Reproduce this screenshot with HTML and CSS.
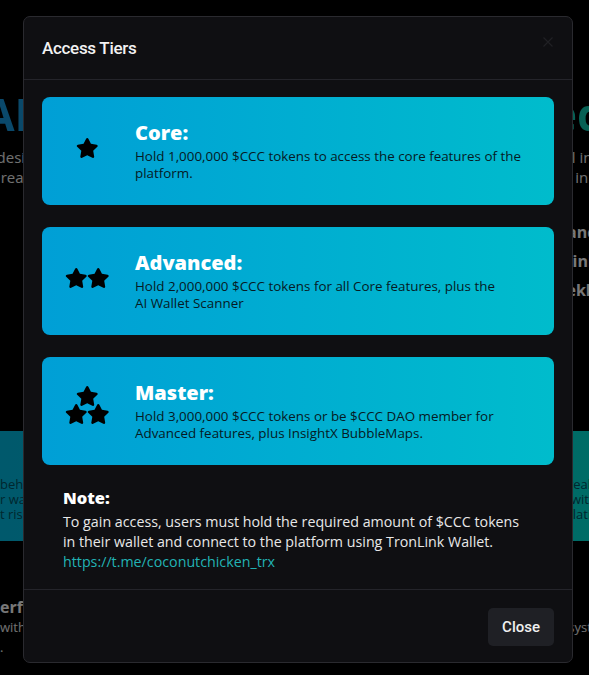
FILE: index.html
```html
<!DOCTYPE html>
<html lang="en">
<head>
<meta charset="utf-8">
<title>Access Tiers</title>
<link rel="stylesheet" href="styles.css">
</head>
<body>
<main class="page">
  <section class="hero">
    <div class="hero-row"><h1 class="hero-title">AI-Powered Scans Redefined</h1></div>
    <div class="hero-row hero-row-first"><p class="hero-line">design to deliver deep on-chain analysis, wallet scoring and smart tracking tools, all in</p></div>
    <div class="hero-row"><p class="hero-line">real-time, giving traders clarity and the full confidence they need to stay ahead, all in</p></div>
    <ul class="hero-points">
      <li>Scan any wallet for suspicious activity and quick</li>
      <li>Visualise token holder clusters and its links</li>
      <li>Receive alerts on whale moves and weekly</li>
    </ul>
  </section>
  <section class="band">
    <p class="band-text">behind every transaction there is a story to be told and understood by traders; our scanner reveals the pockets of</p>
    <p class="band-text">r wallets that move markets, their connections and the direct relations in the wider ecosystem with selection</p>
    <p class="band-text">t risks they create for everyone. Stay informed with smart alerts, protection tools and holder relationships</p>
  </section>
  <section class="perf">
    <h3 class="perf-title">erformance</h3>
    <p class="perf-text">with optimised infrastructure built for speed and scale across many platforms and trading ecosystems</p>
    <p class="perf-text">.</p>
  </section>
</main>

<div class="backdrop"></div>

<div class="modal-wrap">
  <div class="modal" role="dialog" aria-labelledby="tiers-title">
    <header class="modal-header">
      <h2 class="modal-title" id="tiers-title">Access Tiers</h2>
      <button class="modal-x" aria-label="Close">
        <svg viewBox="0 0 16 16" width="12" height="12"><path d="M2 2L14 14M14 2L2 14" stroke="currentColor" stroke-width="1.6" fill="none"/></svg>
      </button>
    </header>

    <div class="modal-body">
      <div class="tier">
        <div class="tier-icon">
          <svg class="star" viewBox="0 0 576 512"><path d="M259.3 17.8L194 150.2 47.9 171.5c-26.2 3.8-36.7 36.1-17.7 54.6l105.7 103-25 145.5c-4.5 26.3 23.2 46 46.4 33.7L288 439.6l130.7 68.7c23.2 12.2 50.9-7.4 46.4-33.7l-25-145.5 105.7-103c19-18.5 8.5-50.8-17.7-54.6L382 150.2 316.7 17.8c-11.7-23.6-45.6-23.9-57.4 0z"/></svg>
        </div>
        <div class="tier-text">
          <h3 class="tier-name">Core:</h3>
          <p class="tier-desc">Hold 1,000,000 $CCC tokens to access the core features of the platform.</p>
        </div>
      </div>

      <div class="tier">
        <div class="tier-icon">
          <div class="star-row">
            <svg class="star" viewBox="0 0 576 512"><path d="M259.3 17.8L194 150.2 47.9 171.5c-26.2 3.8-36.7 36.1-17.7 54.6l105.7 103-25 145.5c-4.5 26.3 23.2 46 46.4 33.7L288 439.6l130.7 68.7c23.2 12.2 50.9-7.4 46.4-33.7l-25-145.5 105.7-103c19-18.5 8.5-50.8-17.7-54.6L382 150.2 316.7 17.8c-11.7-23.6-45.6-23.9-57.4 0z"/></svg>
            <svg class="star" viewBox="0 0 576 512"><path d="M259.3 17.8L194 150.2 47.9 171.5c-26.2 3.8-36.7 36.1-17.7 54.6l105.7 103-25 145.5c-4.5 26.3 23.2 46 46.4 33.7L288 439.6l130.7 68.7c23.2 12.2 50.9-7.4 46.4-33.7l-25-145.5 105.7-103c19-18.5 8.5-50.8-17.7-54.6L382 150.2 316.7 17.8c-11.7-23.6-45.6-23.9-57.4 0z"/></svg>
          </div>
        </div>
        <div class="tier-text">
          <h3 class="tier-name">Advanced:</h3>
          <p class="tier-desc">Hold 2,000,000 $CCC tokens for all Core features, plus the AI&nbsp;Wallet Scanner</p>
        </div>
      </div>

      <div class="tier">
        <div class="tier-icon tier-icon-pyramid">
          <div class="pyramid">
            <div class="star-row">
              <svg class="star" viewBox="0 0 576 512"><path d="M259.3 17.8L194 150.2 47.9 171.5c-26.2 3.8-36.7 36.1-17.7 54.6l105.7 103-25 145.5c-4.5 26.3 23.2 46 46.4 33.7L288 439.6l130.7 68.7c23.2 12.2 50.9-7.4 46.4-33.7l-25-145.5 105.7-103c19-18.5 8.5-50.8-17.7-54.6L382 150.2 316.7 17.8c-11.7-23.6-45.6-23.9-57.4 0z"/></svg>
            </div>
            <div class="star-row star-row-lower">
              <svg class="star" viewBox="0 0 576 512"><path d="M259.3 17.8L194 150.2 47.9 171.5c-26.2 3.8-36.7 36.1-17.7 54.6l105.7 103-25 145.5c-4.5 26.3 23.2 46 46.4 33.7L288 439.6l130.7 68.7c23.2 12.2 50.9-7.4 46.4-33.7l-25-145.5 105.7-103c19-18.5 8.5-50.8-17.7-54.6L382 150.2 316.7 17.8c-11.7-23.6-45.6-23.9-57.4 0z"/></svg>
              <svg class="star" viewBox="0 0 576 512"><path d="M259.3 17.8L194 150.2 47.9 171.5c-26.2 3.8-36.7 36.1-17.7 54.6l105.7 103-25 145.5c-4.5 26.3 23.2 46 46.4 33.7L288 439.6l130.7 68.7c23.2 12.2 50.9-7.4 46.4-33.7l-25-145.5 105.7-103c19-18.5 8.5-50.8-17.7-54.6L382 150.2 316.7 17.8c-11.7-23.6-45.6-23.9-57.4 0z"/></svg>
            </div>
          </div>
        </div>
        <div class="tier-text">
          <h3 class="tier-name">Master:</h3>
          <p class="tier-desc">Hold 3,000,000 $CCC tokens or be $CCC DAO member for Advanced features, plus InsightX BubbleMaps.</p>
        </div>
      </div>

      <div class="note">
        <h4 class="note-title">Note:</h4>
        <p class="note-text">To gain access, users must hold the required amount of $CCC tokens in their wallet and connect to the platform using TronLink Wallet.<br><a class="note-link" href="#">https://t.me/coconutchicken_trx</a></p>
      </div>
    </div>

    <footer class="modal-footer">
      <button class="btn-close">Close</button>
    </footer>
  </div>
</div>
</body>
</html>
```

FILE: styles.css
```css
html, body {
  margin: 0;
  padding: 0;
  background: #000;
  height: 100%;
  overflow: hidden;
}

body {
  font-family: "Open Sans", "DejaVu Sans", sans-serif;
}

/* ---------- background page ---------- */
.page {
  width: 100%;
  overflow: hidden;
}

.hero {
  padding-top: 88px;
}

.hero-row {
  display: flex;
  justify-content: center;
}

.hero-row-first {
  margin-top: 7px;
}

.hero-title {
  margin: 0;
  white-space: nowrap;
  font-size: 44px;
  font-weight: 700;
  line-height: 52px;
  background: linear-gradient(90deg, #1590d8, #0fc4a8);
  -webkit-background-clip: text;
  background-clip: text;
  color: transparent;
}

.hero-line {
  margin: 0;
  white-space: nowrap;
  font-size: 15px;
  line-height: 20px;
  color: #e0e0e0;
}

.hero-points {
  list-style: none;
  margin: 31px 0 0;
  padding: 0 0 0 260px;
  white-space: nowrap;
}

.hero-points li {
  font-size: 16px;
  font-weight: 700;
  line-height: 29px;
  color: #f0f0f0;
}

.band {
  margin-top: 126px;
  height: 110px;
  box-sizing: border-box;
  padding-top: 46px;
  background: linear-gradient(90deg, #00b2d8, #00d8cc);
}

.band-text {
  margin: 0;
  white-space: nowrap;
  font-size: 13px;
  line-height: 15px;
  color: #004f5e;
}

.perf {
  padding-top: 56px;
}

.perf-title {
  margin: 0;
  font-size: 16px;
  font-weight: 700;
  line-height: 20px;
  color: #f0f0f0;
}

.perf-text {
  margin: 0;
  white-space: nowrap;
  font-size: 13px;
  line-height: 20px;
  color: #e0e0e0;
}

.backdrop {
  position: fixed;
  inset: 0;
  background: rgba(0, 0, 0, 0.5);
}

/* ---------- modal ---------- */
.modal-wrap {
  position: fixed;
  inset: 0;
  padding: 16px 0 0 23px;
}

.modal {
  width: 550px;
  box-sizing: border-box;
  background: #0f0f12;
  border: 1px solid #2a2a2f;
  border-radius: 7px;
}

.modal-header {
  display: flex;
  align-items: flex-start;
  justify-content: space-between;
  padding: 18px 18px;
  border-bottom: 1px solid #24242a;
}

.modal-title {
  margin: 0;
  font-family: "Roboto", "Liberation Sans", sans-serif;
  font-size: 17px;
  font-weight: 500;
  line-height: 26px;
  letter-spacing: -0.3px;
  color: #f2f2f2;
}

.modal-x {
  background: none;
  border: 0;
  padding: 0;
  margin-top: 1px;
  color: #202024;
  display: flex;
}

.modal-body {
  padding: 17px 18px 17px;
}

.tier {
  display: flex;
  align-items: center;
  height: 108px;
  box-sizing: border-box;
  padding: 0 20px;
  margin-bottom: 22px;
  border-radius: 8px;
  background: linear-gradient(90deg, #009fd6, #00bccc);
}

.tier-icon {
  width: 50px;
  flex: none;
  display: flex;
  justify-content: center;
  margin-right: 23px;
  padding-bottom: 7px;
}

.tier-icon-pyramid {
  padding-bottom: 13px;
}

.star-row {
  display: flex;
  justify-content: center;
}

.star-row-lower {
  margin-top: -2px;
}

.star {
  display: block;
  width: 22.5px;
  height: 20px;
  fill: #000;
}

.tier-text {
  flex: 1;
  min-width: 0;
}

.tier-name {
  margin: 0;
  font-size: 20px;
  font-weight: 800;
  line-height: 26px;
  color: #fff;
}

.tier-desc {
  margin: 2px 0 0;
  font-size: 13.4px;
  line-height: 17.5px;
  color: #061a24;
}

.note {
  padding: 0 30px 0 21px;
}

.note-title {
  margin: 0;
  font-size: 16.5px;
  font-weight: 800;
  line-height: 22px;
  color: #fff;
}

.note-text {
  margin: 3px 0 0;
  font-size: 14.25px;
  line-height: 20px;
  color: #e8e8e8;
}

.note-link {
  color: #22b3b5;
  text-decoration: none;
}

.modal-footer {
  display: flex;
  justify-content: flex-end;
  padding: 18px 18px 16px;
  border-top: 1px solid #24242a;
}

.btn-close {
  height: 38px;
  padding: 0 14px;
  border: 0;
  border-radius: 5px;
  background: #1f2025;
  color: #f0f0f0;
  font-family: "Roboto", "Liberation Sans", sans-serif;
  font-size: 15px;
  font-weight: 500;
}
```
